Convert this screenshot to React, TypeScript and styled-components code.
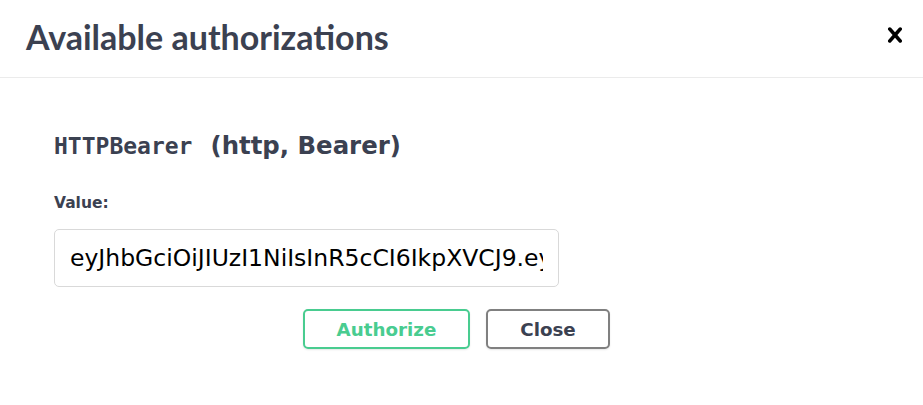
import React from "react";
import styled, { createGlobalStyle } from "styled-components";

const Global = createGlobalStyle`
  html, body { margin: 0; padding: 0; background: #ffffff; }
  body { font-family: "DejaVu Sans", Verdana, sans-serif; color: #3b4151; }
  * { box-sizing: border-box; }
`;

const Modal = styled.div`
  width: 923px;
  height: 405px;
  background: #fff;
  display: flex;
  flex-direction: column;
`;

const Header = styled.header`
  height: 78px;
  display: flex;
  align-items: center;
  justify-content: space-between;
  padding: 0 13px 3px 26px;
  border-bottom: 1px solid #ebebeb;
`;

const Title = styled.h3`
  margin: 0;
  font-family: Lato, "Noto Sans", sans-serif;
  font-weight: 700;
  font-size: 34px;
  line-height: 40px;
  color: #3b4151;
`;

const CloseIcon = styled.button`
  width: 30px;
  height: 30px;
  margin-bottom: 4px;
  padding: 0;
  border: none;
  background: none;
  display: flex;
  align-items: center;
  justify-content: center;
  cursor: pointer;
  svg { width: 30px; height: 30px; fill: #000; }
`;

const Body = styled.div`
  padding: 53px 64px 0 54px;
  display: flex;
  flex-direction: column;
  align-items: flex-start;
`;

const SchemeTitle = styled.h4`
  margin: 0;
  font-family: "DejaVu Sans", Verdana, sans-serif;
  font-weight: 700;
  font-size: 24.4px;
  line-height: 30px;
  color: #3b4151;
  display: flex;
  align-items: baseline;
`;

const Code = styled.code`
  font-family: "DejaVu Sans Mono", "Liberation Mono", monospace;
  font-weight: 700;
  font-size: 23px;
  margin-right: 18px;
`;

const Label = styled.label`
  margin-top: 32px;
  font-family: "DejaVu Sans", Verdana, sans-serif;
  font-weight: 700;
  font-size: 15.5px;
  line-height: 20px;
  color: #3b4151;
`;

const Input = styled.input`
  margin-top: 16px;
  width: 505px;
  height: 58px;
  padding: 0 15px;
  border: 1px solid #d9d9d9;
  border-radius: 5px;
  font-family: "DejaVu Sans", Verdana, sans-serif;
  font-size: 23.5px;
  color: #000;
  background: #fff;
  outline: none;
`;

const ButtonRow = styled.div`
  align-self: stretch;
  margin-top: 22px;
  display: flex;
  justify-content: center;
  gap: 16px;
`;

const Btn = styled.button<{ $variant: "authorize" | "close" }>`
  height: 40px;
  border-radius: 5px;
  border: 2px solid ${(p) => (p.$variant === "authorize" ? "#49cc90" : "#808080")};
  color: ${(p) => (p.$variant === "authorize" ? "#49cc90" : "#3b4151")};
  width: ${(p) => (p.$variant === "authorize" ? "167px" : "124px")};
  background: transparent;
  box-shadow: 0 1px 2px rgba(0, 0, 0, 0.1);
  font-family: "DejaVu Sans", Verdana, sans-serif;
  font-weight: 700;
  font-size: 18.3px;
  cursor: pointer;
`;

export default function App() {
  return (
    <>
      <Global />
      <Modal>
        <Header>
          <Title>Available authorizations</Title>
          <CloseIcon aria-label="Close">
            <svg viewBox="0 0 20 20" aria-hidden="true">
              <path d="M14.348 14.849c-.469.469-1.229.469-1.697 0L10 11.819l-2.651 3.029c-.469.469-1.229.469-1.697 0-.469-.469-.469-1.229 0-1.697l2.758-3.15-2.759-3.152c-.469-.469-.469-1.228 0-1.697.469-.469 1.228-.469 1.697 0L10 8.183l2.651-3.031c.469-.469 1.228-.469 1.697 0 .469.469.469 1.229 0 1.697l-2.758 3.152 2.758 3.15c.469.469.469 1.229 0 1.698z" />
            </svg>
          </CloseIcon>
        </Header>
        <Body>
          <SchemeTitle>
            <Code>HTTPBearer</Code>
            (http, Bearer)
          </SchemeTitle>
          <Label>Value:</Label>
          <Input
            type="text"
            readOnly
            defaultValue="eyJhbGciOiJIUzI1NiIsInR5cCI6IkpXVCJ9.eyJzdWIiOiIxMjM0NTY3ODkwIiwibmFtZSI6IkpvaG4gRG9lIn0"
          />
          <ButtonRow>
            <Btn $variant="authorize">Authorize</Btn>
            <Btn $variant="close">Close</Btn>
          </ButtonRow>
        </Body>
      </Modal>
    </>
  );
}
